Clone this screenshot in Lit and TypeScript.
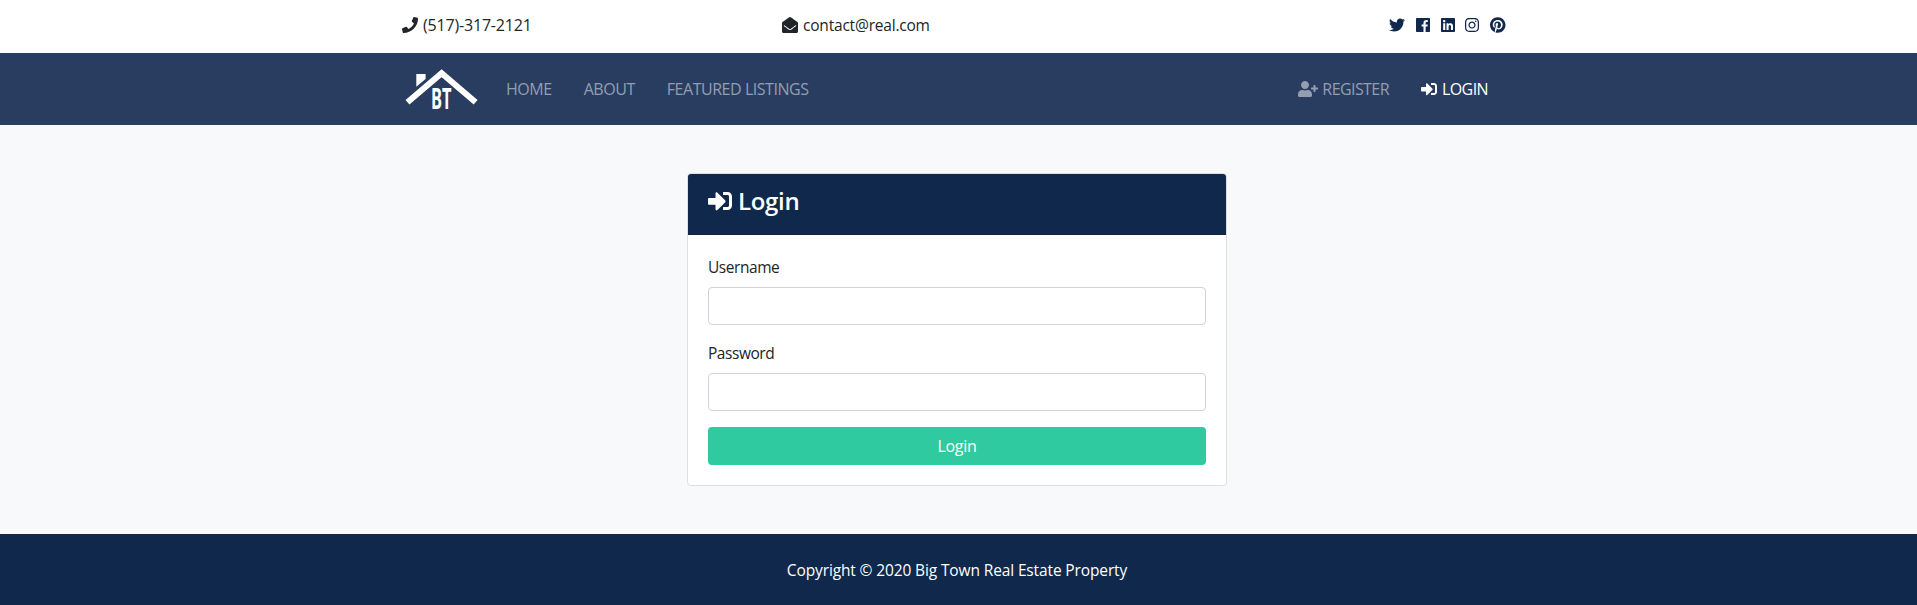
import { LitElement, html, css, svg } from "lit";
import { customElement } from "lit/decorators.js";

const icons: Record<string, [number, string]> = {
  phone: [512, "M493.4 24.6l-104-24c-11.3-2.6-22.9 3.3-27.5 13.9l-48 112c-4.200 9.800-1.400 21.300 6.900 28l60.600 49.600c-36 76.700-98.900 140.500-177.200 177.200l-49.600-60.600c-6.800-8.300-18.200-11.100-28-6.900l-112 48C3.900 366.500-2 378.100.6 389.400l24 104C27.100 504.200 36.700 512 48 512c256.100 0 464-207.500 464-464 0-11.200-7.700-20.900-18.600-23.400z"],
  mail: [512, "M512 464c0 26.510-21.490 48-48 48H48c-26.510 0-48-21.490-48-48V200.724a48 48 0 0 1 18.387-37.776c24.913-19.529 45.501-35.365 164.200-121.511C199.412 29.170 232.797-.347 256 .003c23.198-.354 56.596 29.172 73.413 41.433 118.687 86.137 139.303 101.995 164.200 121.512A48 48 0 0 1 512 200.724V464zm-65.666-196.605c-2.563-3.728-7.700-4.595-11.339-1.907-22.845 16.873-55.462 40.705-105.582 77.079-16.825 12.266-50.210 41.781-73.413 41.430-23.211.344-56.559-29.143-73.413-41.430-50.114-36.370-82.734-60.204-105.582-77.079-3.639-2.688-8.776-1.821-11.339 1.907l-9.072 13.196a7.998 7.998 0 0 0 1.839 10.967c22.887 16.899 55.454 40.690 105.303 76.868 20.274 14.781 56.524 47.813 92.264 47.573 35.724.242 71.961-32.771 92.263-47.573 49.850-36.179 82.418-59.970 105.303-76.868a7.998 7.998 0 0 0 1.839-10.967l-9.071-13.196z"],
  twitter: [512, "M459.37 151.716c.325 4.548.325 9.097.325 13.645 0 138.720-105.583 298.558-298.558 298.558-59.452 0-114.680-17.219-161.137-47.106 8.447.974 16.568 1.299 25.340 1.299 49.055 0 94.213-16.568 130.274-44.832-46.132-.975-84.792-31.188-98.112-72.772 6.498.974 12.995 1.624 19.818 1.624 9.421 0 18.843-1.300 27.614-3.573-48.081-9.747-84.143-51.980-84.143-102.985v-1.299c13.969 7.797 30.214 12.670 47.431 13.319-28.264-18.843-46.781-51.005-46.781-87.391 0-19.492 5.197-37.360 14.294-52.954 51.655 63.675 129.300 105.258 216.365 109.807-1.624-7.797-2.599-15.918-2.599-24.040 0-57.828 46.782-104.934 104.934-104.934 30.213 0 57.502 12.670 76.670 33.137 23.715-4.548 46.456-13.320 66.599-25.340-7.798 24.366-24.366 44.833-46.132 57.827 21.117-2.273 41.584-8.122 60.426-16.243-14.292 20.791-32.161 39.308-52.628 54.253z"],
  facebook: [448, "M448 56.7v398.500c0 13.700-11.100 24.700-24.700 24.700H309.100V306.500h58.200l8.700-67.600h-67v-43.200c0-19.600 5.400-32.900 33.500-32.900h35.800v-60.500c-6.200-.8-27.400-2.700-52.200-2.700-51.600 0-87 31.500-87 89.400v49.900h-58.400v67.600h58.400V480H24.700C11.100 480 0 468.900 0 455.300V56.700C0 43.100 11.100 32 24.700 32h398.500c13.700 0 24.800 11.100 24.800 24.700z"],
  linkedin: [448, "M416 32H31.900C14.300 32 0 46.500 0 64.300v383.400C0 465.500 14.300 480 31.900 480H416c17.600 0 32-14.500 32-32.300V64.300c0-17.800-14.400-32.300-32-32.300zM135.400 416H69V202.200h66.500V416zm-33.200-243c-21.300 0-38.500-17.300-38.500-38.500S80.900 96 102.200 96c21.200 0 38.500 17.300 38.500 38.500 0 21.300-17.200 38.500-38.500 38.500zm282.100 243h-66.400V312c0-24.800-.5-56.700-34.500-56.700-34.600 0-39.900 27-39.900 54.900V416h-66.400V202.200h63.700v29.200h.9c8.900-16.800 30.600-34.500 62.900-34.500 67.200 0 79.700 44.300 79.700 101.900V416z"],
  instagram: [448, "M224.100 141c-63.600 0-114.900 51.300-114.900 114.900s51.300 114.900 114.900 114.900S339 319.500 339 255.900 287.700 141 224.100 141zm0 189.600c-41.100 0-74.700-33.500-74.700-74.700s33.500-74.700 74.700-74.700 74.700 33.500 74.700 74.700-33.600 74.700-74.700 74.700zm146.400-194.300c0 14.900-12 26.800-26.800 26.800-14.900 0-26.800-12-26.800-26.800s12-26.800 26.800-26.800 26.800 12 26.800 26.800zm76.100 27.200c-1.700-35.900-9.900-67.700-36.200-93.900-26.200-26.200-58-34.400-93.900-36.200-37-2.100-147.900-2.100-184.900 0-35.800 1.700-67.600 9.900-93.900 36.100s-34.400 58-36.200 93.900c-2.100 37-2.100 147.900 0 184.900 1.700 35.900 9.900 67.700 36.200 93.900s58 34.400 93.900 36.200c37 2.100 147.900 2.100 184.900 0 35.900-1.700 67.700-9.900 93.900-36.200 26.200-26.200 34.400-58 36.200-93.900 2.100-37 2.100-147.800 0-184.800zM398.800 388c-7.800 19.600-22.900 34.700-42.600 42.600-29.500 11.700-99.500 9-132.100 9s-102.700 2.600-132.100-9c-19.600-7.800-34.700-22.900-42.600-42.600-11.700-29.500-9-99.500-9-132.100s-2.600-102.700 9-132.100c7.800-19.600 22.900-34.700 42.600-42.600 29.500-11.700 99.500-9 132.100-9s102.700-2.600 132.100 9c19.600 7.800 34.700 22.900 42.600 42.600 11.700 29.500 9 99.500 9 132.100s2.700 102.700-9 132.100z"],
  pinterest: [496, "M496 256c0 137-111 248-248 248-25.600 0-50.200-3.900-73.400-11.100 10.100-16.500 25.200-43.500 30.800-65 3-11.600 15.400-59 15.400-59 8.100 15.400 31.700 28.500 56.800 28.500 74.800 0 128.700-68.800 128.700-154.300 0-81.900-66.900-143.200-152.900-143.200-107 0-163.900 71.800-163.900 150.100 0 36.400 19.400 81.700 50.300 96.100 4.700 2.200 7.200 1.200 8.300-3.300.8-3.400 5-20.300 6.900-28.100.6-2.500.3-4.700-1.700-7.100-10.100-12.500-18.300-35.300-18.300-56.600 0-54.700 41.400-107.600 112-107.600 60.900 0 103.600 41.500 103.600 100.900 0 67.100-33.900 113.600-78 113.600-24.300 0-42.600-20.100-36.700-44.800 7-29.500 20.500-61.300 20.500-82.600 0-19-10.200-34.900-31.400-34.900-24.900 0-44.900 25.700-44.900 60.200 0 22 7.400 36.800 7.400 36.800s-24.500 103.800-29 123.200c-5 21.400-3 51.600-.9 71.200C65.400 450.900 0 361.100 0 256 0 119 111 8 248 8s248 111 248 248z"],
  userPlus: [640, "M624 208h-64v-64c0-8.800-7.200-16-16-16h-32c-8.800 0-16 7.200-16 16v64h-64c-8.800 0-16 7.200-16 16v32c0 8.800 7.200 16 16 16h64v64c0 8.800 7.200 16 16 16h32c8.800 0 16-7.200 16-16v-64h64c8.800 0 16-7.200 16-16v-32c0-8.800-7.200-16-16-16zm-400 48c70.700 0 128-57.300 128-128S294.700 0 224 0 96 57.300 96 128s57.300 128 128 128zm89.600 32h-16.700c-22.200 10.200-46.900 16-72.900 16s-50.600-5.800-72.900-16h-16.700C60.200 288 0 348.200 0 422.400V464c0 26.500 21.500 48 48 48h352c26.500 0 48-21.500 48-48v-41.600c0-74.200-60.200-134.400-134.400-134.400z"],
  signIn: [512, "M416 448h-84c-6.600 0-12-5.400-12-12v-40c0-6.600 5.400-12 12-12h84c17.700 0 32-14.300 32-32V160c0-17.700-14.300-32-32-32h-84c-6.600 0-12-5.400-12-12V76c0-6.600 5.400-12 12-12h84c53 0 96 43 96 96v192c0 53-43 96-96 96zm-47-201L201 79c-15-15-41-4.500-41 17v96H24c-13.300 0-24 10.700-24 24v96c0 13.300 10.700 24 24 24h136v96c0 21.500 26 32 41 17l168-168c9.300-9.400 9.300-24.600 0-34z"],
};

const icon = (name: string) => {
  const [w, d] = icons[name];
  return html`<svg class="icon" viewBox="0 0 ${w} 512" width="${w / 512}em" height="1em" aria-hidden="true">${svg`<path fill="currentColor" d=${d}></path>`}</svg>`;
};

@customElement("app-root")
export class AppRoot extends LitElement {
  static styles = css`
    :host {
      display: flex;
      flex-direction: column;
      height: 605px;
      background: #f8f9fb;
      color: #212529;
      font: 400 16px/24px "Segoe UI", "Open Sans", "Noto Sans", sans-serif;
    }
    * { box-sizing: border-box; }
    a { color: inherit; text-decoration: none; white-space: nowrap; }
    .icon { display: inline-block; vertical-align: -0.125em; overflow: visible; flex: none; }
    .topbar, .navbar, .main, .footer { padding-right: 3px; }
    .topbar { height: 53px; background: #fff; }
    .container { width: 1140px; margin: 0 auto; padding: 0 15px; }
    .columns { display: grid; grid-template-columns: repeat(3, 380px); padding-top: 13px; }
    .contact { display: flex; align-items: center; gap: 5px; }
    .phone { letter-spacing: -0.18px; }
    .email { font-size: 15.5px; letter-spacing: -0.2px; }
    .social { display: flex; align-items: center; justify-content: flex-end; gap: 10.7px; padding-right: 36.5px; color: #10284e; }
    .social a { display: flex; }
    .navbar { height: 72px; background: #293d60; color: #949eb0; }
    .row { display: flex; align-items: center; height: 72px; }
    .logo { display: block; width: 80px; height: 60px; }
    .logo-text { font: 700 20px "Open Sans", sans-serif; }
    .links { display: flex; gap: 32px; margin-left: 24px; letter-spacing: -0.46px; }
    .account { display: flex; gap: 32.5px; margin-left: auto; padding-right: 24px; letter-spacing: -0.58px; }
    .account a { display: flex; align-items: center; gap: 4.500px; }
    .account .active { color: #fff; }
    .main { height: 409px; padding-top: 48px; }
    .card { width: 540px; height: 313px; margin: 0 auto; background: #fff; border: 1px solid #dfdfdf; border-radius: 4px; }
    .card-header { height: 61px; padding: 12px 20px; background: #10284c; border-bottom: 1px solid #0e2344; border-radius: 3px 3px 0 0; color: #fff; }
    .title { display: flex; align-items: center; gap: 6px; margin: 0; font-size: 24px; font-weight: 600; line-height: 29px; letter-spacing: -0.3px; }
    .form { display: flex; flex-direction: column; gap: 16px; padding: 20px; }
    .field { display: flex; flex-direction: column; gap: 8px; }
    .label { font-size: 15.5px; letter-spacing: -0.45px; height: 24px; }
    .input { height: 38px; width: 100%; padding: 6px 12px; border: 1px solid #ced4da; border-radius: 4px; background: #fff; font: inherit; outline: none; }
    .button { height: 38px; padding: 0; border: 0; border-radius: 4px; background: #30caa0; color: #fff; font: inherit; letter-spacing: -0.3px; }
    .footer { height: 71px; padding-top: 24px; background: #10284c; color: #fff; text-align: center; }
    .copy { font-size: 15.5px; letter-spacing: -0.13px; }
  `;

  render() {
    return html`
      <header class="topbar">
        <div class="container columns">
          <div class="contact">${icon("phone")}<span class="phone">(517)-317-2121</span></div>
          <div class="contact">${icon("mail")}<span class="email">contact@real.com</span></div>
          <div class="social">
            ${["twitter", "facebook", "linkedin", "instagram", "pinterest"].map((n) => html`<a aria-label=${n}>${icon(n)}</a>`)}
          </div>
        </div>
      </header>
      <nav class="navbar">
        <div class="container row">
          <svg class="logo" viewBox="0 -7 80 60" role="img" aria-label="BT">
            <path d="M5.500 36.300 39.600 7.300 73.600 36.300" fill="none" stroke="#fff" stroke-width="6" />
            <path d="M14.300 8h9.300v5L14.300 20.700z" fill="#fff" />
            <text class="logo-text" transform="translate(28.900 43.200) scale(.82 1.400)" fill="#fff">BT</text>
          </svg>
          <div class="links">
            <a>HOME</a><a>ABOUT</a><a>FEATURED LISTINGS</a>
          </div>
          <div class="account">
            <a>${icon("userPlus")}<span>REGISTER</span></a>
            <a class="active">${icon("signIn")}<span>LOGIN</span></a>
          </div>
        </div>
      </nav>
      <main class="main">
        <section class="card">
          <div class="card-header"><h4 class="title">${icon("signIn")}<span>Login</span></h4></div>
          <form class="form">
            <div class="field"><label class="label" for="username">Username</label><input id="username" class="input" type="text" /></div>
            <div class="field"><label class="label" for="password">Password</label><input id="password" class="input" type="password" /></div>
            <button class="button" type="button">Login</button>
          </form>
        </section>
      </main>
      <footer class="footer"><span class="copy">Copyright © 2020 Big Town Real Estate Property</span></footer>
    `;
  }
}
